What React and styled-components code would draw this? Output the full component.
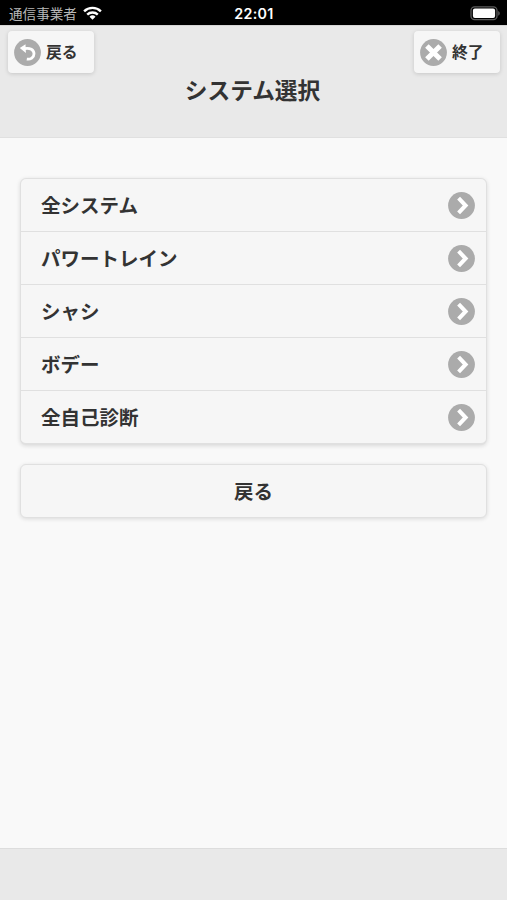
import styled, { createGlobalStyle } from "styled-components";

const GlobalStyle = createGlobalStyle`
    body {
        margin: 0;
        background: #f9f9f9;
    }
    * {
        box-sizing: border-box;
    }
`

const Page = styled.div`
    height: 100vh;
    display: flex;
    flex-direction: column;
    background: #f9f9f9;
    color: #333333;
    font-family: 'Noto Sans CJK JP', sans-serif;
    font-weight: 700;
`

const StatusBar = styled.div`
    height: 25px;
    flex: none;
    display: grid;
    grid-template-columns: 1fr auto 1fr;
    align-items: center;
    padding: 2px 7px 0 9px;
    background: #000000;
    color: #ffffff;
`

const Carrier = styled.div`
    display: flex;
    align-items: center;
    gap: 6px;
    height: 22px;
    padding-bottom: 1px;
    font-size: 13.6px;
    line-height: 20px;
    font-weight: 400;
    color: #b8b8b8;
`

const Clock = styled.div`
    padding-right: 1px;
    font-family: 'Inter', sans-serif;
    font-size: 14.3px;
    font-weight: 600;
    line-height: 22px;
    letter-spacing: 0.3px;
`

const Battery = styled.svg`
    justify-self: end;
`

const Header = styled.header`
    height: 113px;
    flex: none;
    padding: 5px 7px 0 8px;
    background: #e9e9e9;
    border-top: 1px solid #d6d6d6;
    border-bottom: 1px solid #e0e0e0;
`

const HeaderButtons = styled.div`
    display: flex;
    justify-content: space-between;
`

const SmallButton = styled.button`
    width: 86px;
    height: 42px;
    display: flex;
    align-items: center;
    gap: 5px;
    padding: 0 0 0 6px;
    border: 0;
    border-radius: 4px;
    background: #f6f6f6;
    box-shadow: 0 1px 4px rgba(0, 0, 0, 0.15);
    color: #333333;
    font-family: inherit;
    font-size: 15.8px;
    font-weight: 700;
    line-height: 24px;
`

const Title = styled.h1`
    margin: 0;
    padding-right: 3px;
    text-align: center;
    font-size: 22.7px;
    line-height: 34px;
    font-weight: 700;
`

const Content = styled.main`
    flex: 1;
    padding: 40px 20px 0;
`

const List = styled.ul`
    margin: 0 0 19px;
    padding: 0;
    list-style: none;
    border: 1px solid #e0e0e0;
    border-bottom-width: 2px;
    border-radius: 6px;
    background: #f6f6f6;
    box-shadow: 0 1px 4px rgba(0, 0, 0, 0.13);
`

const ListItem = styled.li`
    height: 53px;
    display: flex;
    align-items: center;
    justify-content: space-between;
    padding: 0 11px 0 20px;
    font-size: 19.5px;
    line-height: 28px;
    border-top: 1px solid #e0e0e0;

    &:first-child {
        height: 52px;
        border-top: 0;
    }
`

const BackButton = styled.button`
    display: block;
    width: 100%;
    height: 54px;
    padding: 0;
    border: 1px solid #e0e0e0;
    border-radius: 6px;
    background: #f6f6f6;
    box-shadow: 0 1px 4px rgba(0, 0, 0, 0.13);
    color: #333333;
    font-family: inherit;
    font-size: 19.5px;
    font-weight: 700;
    line-height: 28px;
`

const Footer = styled.footer`
    height: 52px;
    flex: none;
    background: #e9e9e9;
    border-top: 1px solid #dddddd;
`

const WifiIcon = () => (
    <svg width="19" height="14" viewBox="0 0 19 14" fill="none" stroke="#ffffff" strokeWidth="2.4">
        <path d="M1.1 5.3a12 12 0 0 1 16.8 0" />
        <path d="M4.2 8.6a7.6 7.6 0 0 1 10.6 0" />
        <path d="M9.5 13.7L6.5 10.7a4.3 4.3 0 0 1 6 0z" fill="#ffffff" stroke="none" />
    </svg>
)

const BatteryIcon = () => (
    <Battery width="31" height="15" viewBox="0 0 31 15">
        <rect x="2" y="0.9" width="26" height="12.8" rx="3.6" fill="none" stroke="#5c5c5c" strokeWidth="1.3" />
        <rect x="3.9" y="2.6" width="22.2" height="9.4" rx="2" fill="#ffffff" />
        <path d="M29.2 5c2.1 0.8 2.1 3.9 0 4.7z" fill="#5c5c5c" />
    </Battery>
)

const BackIcon = () => (
    <svg width="27" height="27" viewBox="0 0 27 27">
        <circle cx="13.5" cy="13.5" r="13.4" fill="#ababab" />
        <path d="M5.8 9L11.5 5.2L11.9 14.1z" fill="#ffffff" />
        <path d="M10.5 9.6C16 8.4 20 11 20 14.8C20 18.5 16.5 20.7 12.8 20.1" fill="none" stroke="#ffffff" strokeWidth="2.8" />
    </svg>
)

const CloseIcon = () => (
    <svg width="27" height="27" viewBox="0 0 27 27">
        <circle cx="13.5" cy="13.5" r="13.4" fill="#ababab" />
        <path d="M6.9 6.9L20.1 20.1M20.1 6.9L6.9 20.1" stroke="#ffffff" strokeWidth="5" />
    </svg>
)

const ArrowIcon = () => (
    <svg width="27" height="27" viewBox="0 0 27 27">
        <circle cx="13.5" cy="13.5" r="13.4" fill="#ababab" />
        <path d="M10.6 6.2L17.6 13.5L10.6 20.8" fill="none" stroke="#ffffff" strokeWidth="4" />
    </svg>
)

const systems = ["全システム", "パワートレイン", "シャシ", "ボデー", "全自己診断"];

const App = () => {
    return (<>
        <GlobalStyle />
        <Page>
            <StatusBar>
                <Carrier>
                    通信事業者
                    <WifiIcon />
                </Carrier>
                <Clock>22:01</Clock>
                <BatteryIcon />
            </StatusBar>
            <Header>
                <HeaderButtons>
                    <SmallButton><BackIcon />戻る</SmallButton>
                    <SmallButton><CloseIcon />終了</SmallButton>
                </HeaderButtons>
                <Title>システム選択</Title>
            </Header>
            <Content>
                <List>
                    {systems.map((name) => (
                        <ListItem key={name}>
                            {name}
                            <ArrowIcon />
                        </ListItem>
                    ))}
                </List>
                <BackButton>戻る</BackButton>
            </Content>
            <Footer />
        </Page>
    </>)
}

export default App
